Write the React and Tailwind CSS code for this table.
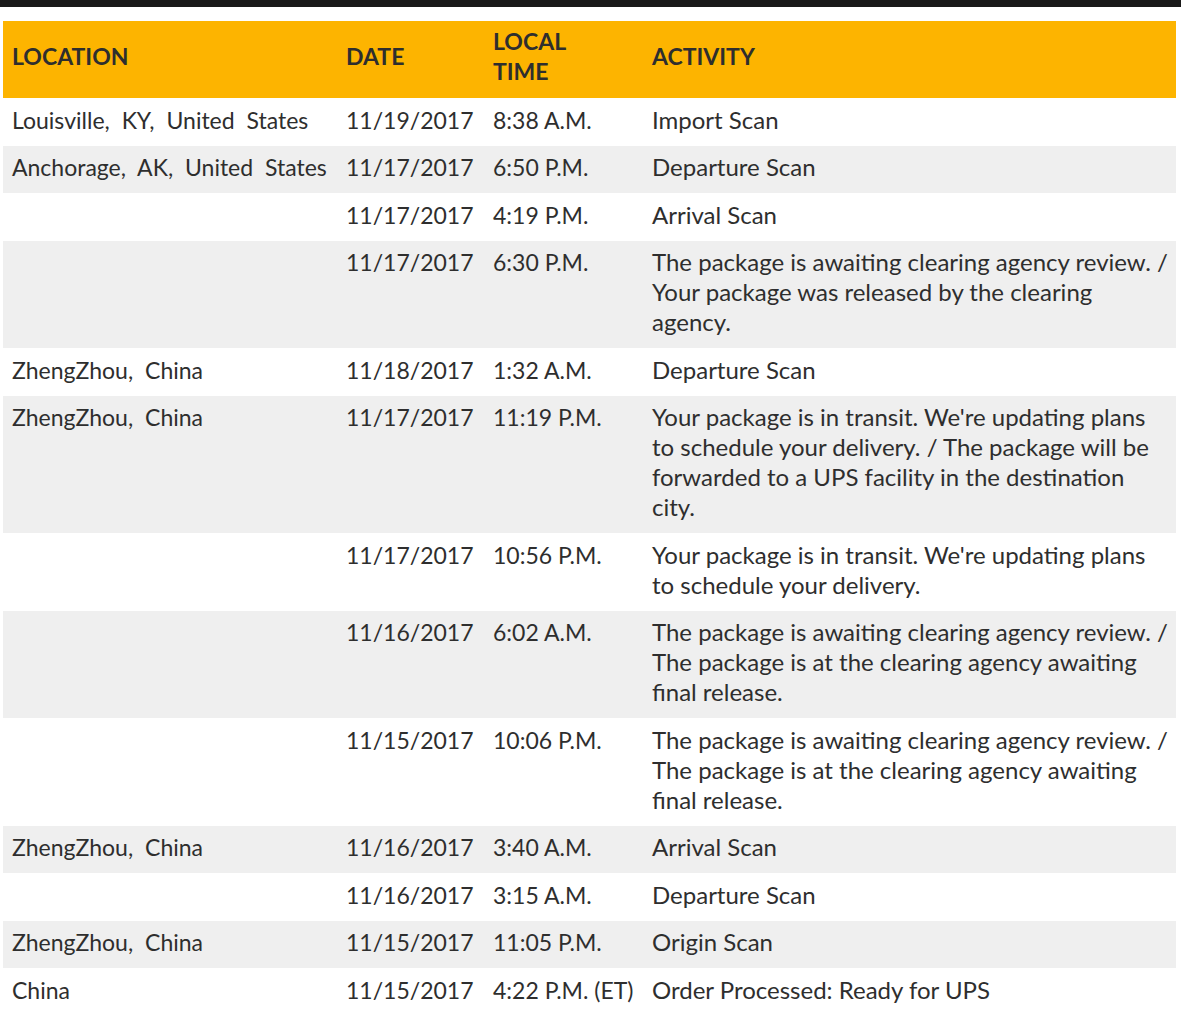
import React from 'react';

const rows = [
  { loc: 'Louisville, KY, United States', date: '11/19/2017', time: '8:38 A.M.', act: 'Import Scan' },
  { loc: 'Anchorage, AK, United States', date: '11/17/2017', time: '6:50 P.M.', act: 'Departure Scan' },
  { loc: '', date: '11/17/2017', time: '4:19 P.M.', act: 'Arrival Scan' },
  { loc: '', date: '11/17/2017', time: '6:30 P.M.', act: 'The package is awaiting clearing agency review. / Your package was released by the clearing agency.' },
  { loc: 'ZhengZhou, China', date: '11/18/2017', time: '1:32 A.M.', act: 'Departure Scan' },
  { loc: 'ZhengZhou, China', date: '11/17/2017', time: '11:19 P.M.', act: "Your package is in transit. We're updating plans to schedule your delivery. / The package will be forwarded to a UPS facility in the destination city." },
  { loc: '', date: '11/17/2017', time: '10:56 P.M.', act: "Your package is in transit. We're updating plans to schedule your delivery." },
  { loc: '', date: '11/16/2017', time: '6:02 A.M.', act: 'The package is awaiting clearing agency review. / The package is at the clearing agency awaiting final release.' },
  { loc: '', date: '11/15/2017', time: '10:06 P.M.', act: 'The package is awaiting clearing agency review. / The package is at the clearing agency awaiting final release.' },
  { loc: 'ZhengZhou, China', date: '11/16/2017', time: '3:40 A.M.', act: 'Arrival Scan' },
  { loc: '', date: '11/16/2017', time: '3:15 A.M.', act: 'Departure Scan' },
  { loc: 'ZhengZhou, China', date: '11/15/2017', time: '11:05 P.M.', act: 'Origin Scan' },
  { loc: 'China', date: '11/15/2017', time: '4:22 P.M. (ET)', act: 'Order Processed: Ready for UPS' },
];

export default function App() {
  return (
    <div className="min-h-screen bg-white font-['Lato',sans-serif] text-[#2e2e2e]">
      <div className="h-[7px] bg-[#1a1a1a]" />
      <div className="pl-[3px] pt-[14px]">
        <table className="w-[1173px] table-fixed border-collapse text-left text-[23px] leading-[30px]">
          <colgroup>
            <col className="w-[333px]" />
            <col className="w-[147px]" />
            <col className="w-[159px]" />
            <col />
          </colgroup>
          <thead>
            <tr className="bg-[#fdb400] font-bold uppercase">
              <th className="px-[9px] pt-[5px] pb-[12px] align-middle">Location</th>
              <th className="px-[10px] pt-[5px] pb-[12px] align-middle">Date</th>
              <th className="px-[10px] pt-[5px] pb-[12px] align-middle">Local<br />Time</th>
              <th className="px-[10px] pt-[5px] pb-[12px] align-middle">Activity</th>
            </tr>
          </thead>
          <tbody>
            {rows.map((r, i) => (
              <tr key={i} className={i % 2 === 1 ? 'bg-[#efefef]' : 'bg-white'}>
                <td className="px-[9px] pt-[6.5px] pb-[11px] align-top whitespace-nowrap [word-spacing:6px]">{r.loc}</td>
                <td className="px-[10px] pt-[6.5px] pb-[11px] align-top whitespace-nowrap">{r.date}</td>
                <td className="px-[10px] pt-[6.5px] pb-[11px] align-top whitespace-nowrap">{r.time}</td>
                <td className="pl-[10px] pr-[4px] pt-[6.5px] pb-[11px] align-top text-[24px]">{r.act}</td>
              </tr>
            ))}
          </tbody>
        </table>
      </div>
    </div>
  );
}
